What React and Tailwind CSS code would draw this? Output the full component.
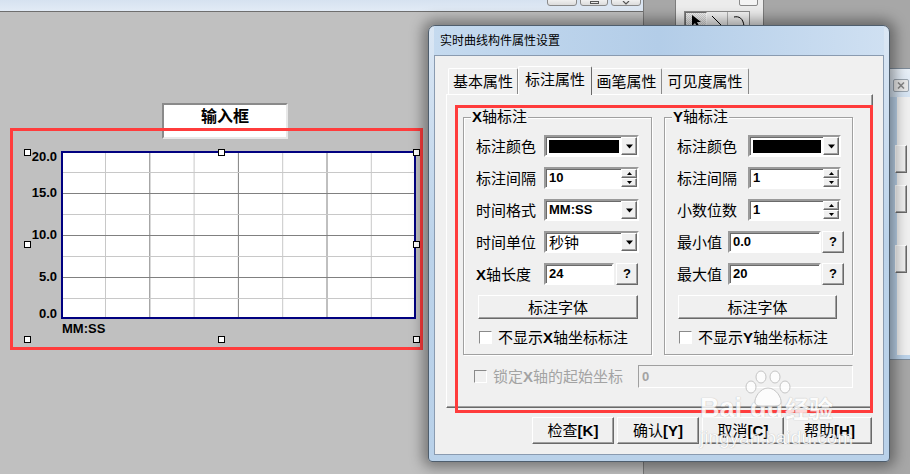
import React from 'react';

const FONT = "font-['Liberation_Sans','Noto_Sans_CJK_SC',sans-serif]";
const SUNKEN = 'border-2 border-t-[#9a9a9a] border-l-[#9a9a9a] border-b-white border-r-white shadow-[inset_1px_1px_0_#6a6a6a] bg-white';
const RAISED = 'border border-t-white border-l-white border-b-[#696969] border-r-[#696969] shadow-[inset_-1px_-1px_0_#a0a0a0] bg-[#f0f0f0]';

function DownTri({ size = 7 }) {
  return (
    <svg width={size} height={Math.ceil(size / 2) + 1} viewBox="0 0 7 4">
      <path d="M0 0h7L3.5 4z" fill="#000" />
    </svg>
  );
}

function Combo({ width, children, dark }) {
  return (
    <div className={`${SUNKEN} flex h-[22px] items-stretch`} style={{ width }}>
      <div className="flex flex-1 items-center pl-[3px] overflow-hidden">{children}</div>
      <div className={`${RAISED} ${dark ? 'bg-[#c0c0c0]' : ''} flex w-[16px] items-center justify-center`}>
        <DownTri />
      </div>
    </div>
  );
}

function Spin({ width, value }) {
  return (
    <div className={`${SUNKEN} flex h-[22px] items-stretch`} style={{ width }}>
      <div className="flex flex-1 items-center pl-[3px] text-[13px] font-bold">{value}</div>
      <div className="flex w-[16px] flex-col">
        <div className={`${RAISED} flex flex-1 items-center justify-center`}>
          <svg width="5" height="3" viewBox="0 0 5 3"><path d="M0 3h5L2.5 0z" fill="#000" /></svg>
        </div>
        <div className={`${RAISED} flex flex-1 items-center justify-center`}>
          <svg width="5" height="3" viewBox="0 0 5 3"><path d="M0 0h5L2.5 3z" fill="#000" /></svg>
        </div>
      </div>
    </div>
  );
}

function Edit({ width, value }) {
  return (
    <div className={`${SUNKEN} flex h-[22px] items-center pl-[3px] text-[13px] font-bold`} style={{ width }}>
      {value}
    </div>
  );
}

function Q() {
  return <div className={`${RAISED} flex h-[22px] w-[22px] items-center justify-center text-[13px] font-bold`}>?</div>;
}

function Check({ disabled }) {
  return (
    <div className={`h-[13px] w-[13px] border border-t-[#8a8a8a] border-l-[#8a8a8a] border-b-white border-r-white ${disabled ? 'bg-[#f0f0f0]' : 'bg-white'}`} />
  );
}

function Row({ label, labelW, children }) {
  return (
    <div className="mb-[10px] flex h-[22px] items-center">
      <div className="text-[15px] leading-none" style={{ width: labelW }}>{label}</div>
      {children}
    </div>
  );
}

function GroupBox({ title, children }) {
  return (
    <div className="relative h-[238px] w-[189px] border border-[#a0a0a0] shadow-[inset_1px_1px_0_#fff,1px_1px_0_#fff]">
      <span className="absolute -top-[10px] left-[7px] bg-[#f0f0f0] px-[1px] text-[15px] leading-[18px]">{title}</span>
      {children}
    </div>
  );
}

function Handle({ x, y }) {
  return <div className="absolute h-[7px] w-[7px] border border-black bg-white" style={{ left: x - 3, top: y - 3 }} />;
}

function ChartGrid() {
  const w = 351;
  const h = 164;
  return (
    <svg width={w} height={h} className="block">
      {[1, 2, 3, 4, 5, 6, 7].map((i) => (
        <line key={'v' + i} x1={42.5 + (i - 1) * 44.3} x2={42.5 + (i - 1) * 44.3} y1="0" y2={h} stroke={i % 2 === 0 ? '#808080' : '#c8c8c8'} strokeWidth="1" />
      ))}
      {[1, 2, 3, 4, 5, 6, 7].map((i) => (
        <line key={'h' + i} y1={19.5 + (i - 1) * 21} y2={19.5 + (i - 1) * 21} x1="0" x2={w} stroke={i % 2 === 0 ? '#808080' : '#c8c8c8'} strokeWidth="1" />
      ))}
    </svg>
  );
}

export default function App() {
  const yLabels = [['20.0', 145], ['15.0', 181], ['10.0', 223], ['5.0', 265], ['0.0', 302]];

  return (
    <div className={`relative h-[474px] w-[910px] overflow-hidden bg-[#a7a7a7] ${FONT} text-black`}>
      {/* editor window behind */}
      <div className="absolute left-0 top-0 flex h-[474px] w-[644px] flex-col border-r border-[#7a7a7a]">
        <div className="relative h-[12px] border-b border-[#6e6e6e] bg-gradient-to-b from-[#d6e2f0] to-[#e2ebf6]">
          <div className="absolute -top-[2px] left-[547px] flex gap-[3px]">
            <div className="h-[8px] w-[30px] rounded-b-[3px] border border-[#8a8a8a] bg-gradient-to-b from-[#f4f4f4] to-[#dcdcdc]" />
            <div className="flex h-[8px] w-[28px] items-end justify-center rounded-b-[3px] border border-[#8a8a8a] bg-gradient-to-b from-[#f4f4f4] to-[#dcdcdc]">
              <div className="mb-[1px] h-[3px] w-[9px] border border-[#555]" />
            </div>
            <div className="flex h-[8px] w-[30px] items-end justify-center rounded-b-[3px] border border-[#8a8a8a] bg-gradient-to-b from-[#f4f4f4] to-[#dcdcdc]">
              <svg width="8" height="4" viewBox="0 0 8 4"><path d="M1 0l3 3 3-3" stroke="#555" strokeWidth="1.2" fill="none" /></svg>
            </div>
          </div>
        </div>
        <div className="relative flex-1 bg-[#c0c0c0]">
          {/* input box */}
          <div className="absolute left-[162px] top-[91px] flex h-[36px] w-[126px] justify-center border-2 border-t-[#8a8a8a] border-l-[#8a8a8a] border-b-[#e8e8e8] border-r-[#e8e8e8] bg-white pt-[2px] text-[16px] font-bold leading-[20px]">
            输入框
          </div>

          {/* chart */}
          {yLabels.map(([t, y]) => (
            <div key={t} className="absolute left-0 w-[57px] text-right text-[13px] font-bold leading-[16px]" style={{ top: y - 8 }}>{t}</div>
          ))}
          <div className="absolute left-[61px] top-[139px] h-[168px] w-[355px] border-2 border-[#000080] bg-white">
            <ChartGrid />
          </div>
          <div className="absolute left-[62px] top-[309px] text-[13px] font-bold leading-[16px]">MM:SS</div>
          {[[27, 140], [221, 140], [416, 140], [27, 232], [416, 232], [27, 327], [221, 327], [416, 327]].map(([x, y]) => (
            <Handle key={x + '-' + y} x={x} y={y} />
          ))}

          <div className="absolute left-[10px] top-[116px] h-[222px] w-[413px] border-[3px] border-[#ff3c3c]" />
        </div>
      </div>

      {/* toolbox window */}
      <div className="absolute left-[675px] top-[-4px] h-[40px] w-[89px] border border-[#7d7d7d] bg-[#ececec]">
        <div className="absolute left-[63px] top-0 h-[9px] w-[19px] rounded-b-[2px] border border-[#8a8a8a] bg-[#f4f4f4]" />
        <div className="absolute left-[8px] top-[14px] flex border border-[#8a8a8a] bg-[#f4f4f4]">
          <div className="flex h-[17px] w-[22px] items-center justify-center border border-t-[#707070] border-l-[#707070] border-b-white border-r-white bg-[repeating-conic-gradient(#d8d8d8_0%_25%,#f8f8f8_0%_50%)] bg-[length:2px_2px]">
            <svg width="10" height="14" viewBox="0 0 10 14"><path d="M1 1v11l3-3 2 4 2-1-2-4h4z" fill="#000" /></svg>
          </div>
          <div className="flex h-[17px] w-[21px] items-center justify-center border-r border-[#b0b0b0]">
            <svg width="12" height="12" viewBox="0 0 12 12"><path d="M1 1l10 10" stroke="#000" strokeWidth="1" /></svg>
          </div>
          <div className="flex h-[17px] w-[21px] items-center justify-center">
            <svg width="12" height="12" viewBox="0 0 12 12"><path d="M1 2c5-1 9 1 10 9" stroke="#000" strokeWidth="1" fill="none" /></svg>
          </div>
        </div>
      </div>

      {/* window behind on the right */}
      <div className="absolute left-[880px] top-[68px] h-[292px] w-[40px] border border-[#7d8b99] bg-[#bcd3ea]">
        <div className="h-[28px] bg-gradient-to-b from-[#e9f0f8] to-[#d5e3f2]">
          <div className="absolute left-[12px] top-[10px] flex h-[13px] w-[16px] items-center justify-center rounded-[2px] border border-[#9aa5b0] bg-[#e8e8e8]">
            <svg width="8" height="7" viewBox="0 0 8 7"><path d="M1 0.5l6 6M7 0.5l-6 6" stroke="#888" strokeWidth="1.6" /></svg>
          </div>
        </div>
        <div className="ml-[16px] h-[258px] bg-[#f0f0f0]">
          <div className="h-[48px]" />
          <div className={`${RAISED} ml-[-2px] h-[28px] w-[12px]`} />
          <div className="h-[12px]" />
          <div className={`${RAISED} ml-[-2px] h-[28px] w-[12px]`} />
          <div className="h-[32px]" />
          <div className={`${RAISED} ml-[-2px] h-[28px] w-[12px]`} />
        </div>
      </div>

      {/* dialog */}
      <div className="absolute left-[428px] top-[25px] flex h-[437px] w-[462px] flex-col rounded-t-[7px] rounded-b-[4px] border border-[#4f5e6d] bg-gradient-to-b from-[#dbe7f4] via-[#bcd3ea] to-[#b9d1e9] px-[5px] pb-[6px] shadow-[0_0_14px_5px_rgba(0,0,0,0.4)]">
        <div className="flex h-[29px] items-center bg-gradient-to-r from-[#c5daef] via-[#b3cde8] to-[#cfe0f2] pl-[6px] text-[12px] leading-none">
          实时曲线构件属性设置
        </div>
        <div className="flex-1 border border-[#8a9bb0] bg-[#f0f0f0]">
          {/* tabs */}
          <div className="flex items-end pl-[13px] pt-[10px]">
            <div className="mb-[1px] flex h-[26px] w-[70px] items-center justify-center rounded-t-[2px] border-l border-t border-r border-l-white border-t-white border-r-[#8a8a8a] text-[15px] leading-none">基本属性</div>
            <div className="relative z-10 flex h-[29px] w-[74px] items-start justify-center rounded-t-[2px] border-l border-t border-r border-l-white border-t-white border-r-[#696969] bg-[#f0f0f0] pt-[5px] text-[15px] leading-none">标注属性</div>
            <div className="mb-[1px] flex h-[26px] w-[70px] items-center justify-center rounded-t-[2px] border-t border-r border-t-white border-r-[#8a8a8a] text-[15px] leading-none">画笔属性</div>
            <div className="mb-[1px] flex h-[26px] w-[87px] items-center justify-center rounded-t-[2px] border-t border-r border-t-white border-r-[#8a8a8a] text-[15px] leading-none">可见度属性</div>
          </div>

          {/* tab panel */}
          <div className="-mt-[1px] ml-[11px] h-[314px] w-[427px] border border-t-white border-l-white border-b-[#696969] border-r-[#696969] shadow-[inset_-1px_-1px_0_#a0a0a0]">
            <div className="flex gap-[12px] pl-[16px] pt-[22px]">
              <GroupBox title={<><b className="font-bold">X</b>轴标注</>}>
                <div className="pl-[12px] pt-[17px]">
                  <Row label="标注颜色" labelW={68}>
                    <Combo width={95} dark>
                      <div className="h-[13px] w-[70px] bg-black" />
                    </Combo>
                  </Row>
                  <Row label="标注间隔" labelW={68}><Spin width={95} value="10" /></Row>
                  <Row label="时间格式" labelW={68}>
                    <Combo width={95}><span className="text-[13px] font-bold">MM:SS</span></Combo>
                  </Row>
                  <Row label="时间单位" labelW={68}>
                    <Combo width={95}><span className="text-[15px] leading-none">秒钟</span></Combo>
                  </Row>
                  <Row label={<><b className="font-bold">X</b>轴长度</>} labelW={68}>
                    <Edit width={70} value="24" />
                    <div className="ml-[2px]"><Q /></div>
                  </Row>
                  <div className={`${RAISED} ml-[2px] mt-[2px] flex h-[24px] w-[160px] items-center justify-center text-[15px] leading-none`}>标注字体</div>
                  <div className="ml-[3px] mt-[11px] flex items-center gap-[6px] text-[15px] leading-none">
                    <Check />
                    <span>不显示<b className="font-bold">X</b>轴坐标标注</span>
                  </div>
                </div>
              </GroupBox>

              <GroupBox title={<><b className="font-bold">Y</b>轴标注</>}>
                <div className="pl-[12px] pt-[17px]">
                  <Row label="标注颜色" labelW={71}>
                    <Combo width={93} dark>
                      <div className="h-[13px] w-[68px] bg-black" />
                    </Combo>
                  </Row>
                  <Row label="标注间隔" labelW={71}><Spin width={93} value="1" /></Row>
                  <Row label="小数位数" labelW={71}><Spin width={93} value="1" /></Row>
                  <Row label="最小值" labelW={51}>
                    <Edit width={93} value="0.0" />
                    <div className="ml-[1px]"><Q /></div>
                  </Row>
                  <Row label="最大值" labelW={51}>
                    <Edit width={93} value="20" />
                    <div className="ml-[1px]"><Q /></div>
                  </Row>
                  <div className={`${RAISED} ml-[1px] mt-[2px] flex h-[24px] w-[159px] items-center justify-center text-[15px] leading-none`}>标注字体</div>
                  <div className="ml-[2px] mt-[11px] flex items-center gap-[6px] text-[15px] leading-none">
                    <Check />
                    <span>不显示<b className="font-bold">Y</b>轴坐标标注</span>
                  </div>
                </div>
              </GroupBox>
            </div>

            <div className="mt-[10px] flex h-[23px] items-center pl-[27px]">
              <div className="flex w-[164px] items-center gap-[6px] text-[15px] leading-none text-[#a3a3a3]">
                <Check disabled />
                <span>锁定<b className="font-bold">X</b>轴的起始坐标</span>
              </div>
              <div className="flex h-[23px] w-[215px] items-center border border-t-[#a0a0a0] border-l-[#a0a0a0] border-b-white border-r-white bg-[#f0f0f0] pl-[3px] text-[13px] font-bold text-[#a3a3a3]">0</div>
            </div>
          </div>

          {/* buttons */}
          <div className="mt-[9px] flex gap-[3px] pl-[97px]">
            {['检查', '确认', '取消', '帮助'].map((t, i) => (
              <div key={t} className={`${RAISED} flex h-[27px] items-center justify-center text-[15px] leading-none ${i === 3 ? 'w-[85px]' : 'w-[82px]'} ${i === 0 ? 'border-[#3a3a3a]' : ''}`}>
                {t}<b className="font-bold">[{['K', 'Y', 'C', 'H'][i]}]</b>
              </div>
            ))}
          </div>
        </div>
      </div>

      {/* annotation over dialog */}
      <div className="absolute left-[455px] top-[105px] h-[308px] w-[418px] border-[3px] border-[#ff3c3c]" />

      {/* watermark */}
      <div className="pointer-events-none absolute left-[700px] top-[370px] w-[160px] text-white opacity-80 [text-shadow:0_0_1px_#999]">
        <svg className="absolute left-[42px] top-0" width="52" height="38" viewBox="0 0 52 38">
          <g fill="#fff" stroke="#bbb" strokeWidth="1">
            <ellipse cx="9" cy="17" rx="5" ry="6" />
            <ellipse cx="19" cy="7" rx="5" ry="6" />
            <ellipse cx="33" cy="7" rx="5" ry="6" />
            <ellipse cx="43" cy="17" rx="5" ry="6" />
            <path d="M26 18c-8 0-14 10-13 15 1 4 8 3 13 3s12 1 13-3c1-5-5-15-13-15z" />
          </g>
        </svg>
        <div className="mt-[25px] flex items-end text-[27px] font-bold leading-none">
          <span>Bai</span><span className="ml-[8px]">du</span><span className="ml-[2px] text-[24px]">经验</span>
        </div>
        <div className="mt-[6px] text-[19px] leading-none">jingyan.baidu.com</div>
      </div>
    </div>
  );
}
